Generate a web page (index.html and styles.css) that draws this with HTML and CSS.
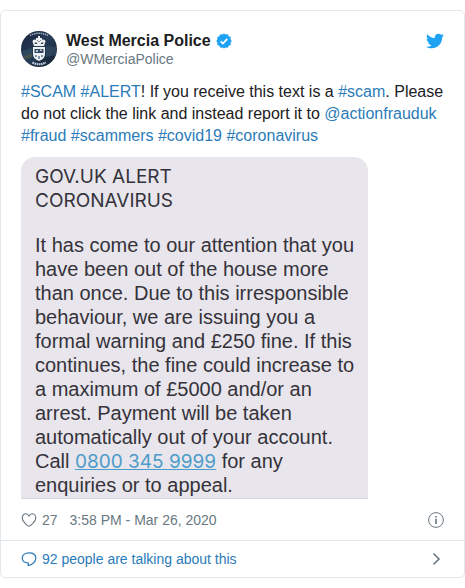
FILE: index.html
```html
<!DOCTYPE html>
<html lang="en">
<head>
<meta charset="utf-8">
<meta name="viewport" content="width=device-width, initial-scale=1">
<title>West Mercia Police on Twitter</title>
<link rel="stylesheet" href="styles.css">
</head>
<body>
<article class="tweet">
  <div class="content">
    <header class="header">
      <a class="author" href="#">
        <svg class="avatar" viewBox="0 0 36 36" aria-hidden="true">
          <defs>
            <linearGradient id="night" x1="0" y1="0" x2="1" y2="1">
              <stop offset="0" stop-color="#17233f"/>
              <stop offset=".5" stop-color="#263c56"/>
              <stop offset="1" stop-color="#111c2d"/>
            </linearGradient>
          </defs>
          <circle cx="18" cy="18" r="18" fill="url(#night)"/>
          <path d="M1 20l10-3v9l-8 2zM25 15l10 1v8l-10 2z" fill="#36546a" opacity=".6"/>
          <path d="M3 25l8-2v3l-7 2z" fill="#575b38" opacity=".6"/>
          <path d="M9 4.500Q18 0 27 4.500" fill="none" stroke="#a7b0c2" stroke-width="1.500" stroke-dasharray="1.500 .7"/>
          <path d="M11.500 31.500Q18 35 25 31.500" fill="none" stroke="#c5d0df" stroke-width="2.200" stroke-dasharray="1.600 .6"/>
          <path d="M17 5h2v2h2v2h-2v1h-2V9h-2V7h2z" fill="#eef2f5"/>
          <path d="M13 15l-1.500-4.500q0-2 2.500-2 2.500 0 4 2.500 1.500-2.500 4-2.500 2.500 0 2.500 2L23 15z" fill="#eef2f5"/>
          <path d="M13.500 11.500h2l1 1.500h-2.500zM19.500 13l1-1.500h2l-.5 1.500z" fill="#34435b"/>
          <path d="M12 16h12v7q0 5-6 7-6-2-6-7z" fill="#eef2f5"/>
          <path d="M13.500 18h9v4h-9z" fill="#344862"/>
          <path d="M15 19h2v2h-2zM19 18.500h2v1.500h-2z" fill="#b8c7d3"/>
          <path d="M14 24h2v2h-2zM17 25h2v3h-2zM20 24h2v2h-2z" fill="#8195aa"/>
        </svg>
        <span class="identity">
          <span class="name">West Mercia Police
            <svg class="verified" viewBox="0 0 16 16" role="img" aria-label="Verified">
              <path d="M8 .4l1.700 1.200 2.100-.3.900 1.900 2 .8-.1 2.200L15.700 8l-1.100 1.800.1 2.200-2 .8-.9 1.900-2.100-.3L8 15.600l-1.700-1.200-2.100.3-.9-1.900-2-.8.1-2.200L.3 8l1.100-1.800L1.300 4l2-.8.9-1.900 2.100.3z" fill="#1da1f2"/>
              <path d="M4.700 8.300l2.200 2.200 4.300-4.600" fill="none" stroke="#fff" stroke-width="1.800"/>
            </svg>
          </span>
          <span class="handle">@WMerciaPolice</span>
        </span>
      </a>
      <a class="brand" href="#" aria-label="Twitter">
        <svg class="bird" viewBox="0 0 24 24" aria-hidden="true">
          <path fill="#1da1f2" d="M23.954 4.569c-.885.389-1.830.654-2.825.775 1.014-.611 1.794-1.574 2.163-2.723-.951.555-2.005.959-3.127 1.184-.896-.959-2.173-1.559-3.591-1.559-2.717 0-4.920 2.203-4.920 4.917 0 .390.045.765.127 1.124C7.691 8.094 4.066 6.130 1.640 3.161c-.427.722-.666 1.561-.666 2.475 0 1.710.870 3.213 2.188 4.096-.807-.026-1.566-.248-2.228-.616v.061c0 2.385 1.693 4.374 3.946 4.827-.413.111-.849.171-1.296.171-.314 0-.615-.030-.916-.086.631 1.953 2.445 3.377 4.604 3.417-1.680 1.319-3.809 2.105-6.102 2.105-.390 0-.779-.023-1.170-.067 2.189 1.394 4.768 2.209 7.557 2.209 9.054 0 13.999-7.496 13.999-13.986 0-.209 0-.420-.015-.630.961-.689 1.800-1.560 2.460-2.548z"/>
        </svg>
      </a>
    </header>

    <p class="text"><a href="#">#SCAM</a> <a href="#">#ALERT</a>! If you receive this text is a <a href="#">#scam</a>. Please do not click the link and instead report it to <a href="#">@actionfrauduk</a> <a href="#">#fraud</a> <a href="#">#scammers</a> <a href="#">#covid19</a> <a href="#">#coronavirus</a></p>

    <div class="message">
      <p class="message-title">GOV.UK ALERT<br>CORONAVIRUS</p>
      <p>It has come to our attention that you<br>have been out of the house more<br>than once. Due to this irresponsible<br>behaviour, we are issuing you a<br>formal warning and £250 fine. If this<br>continues, the fine could increase to<br>a maximum of £5000 and/or an<br>arrest. Payment will be taken<br>automatically out of your account.<br>Call <a class="phone" href="#">0800 345 9999</a> for any<br>enquiries or to appeal.</p>
    </div>

    <div class="meta">
      <button class="like" type="button" aria-label="Like, 27 likes">
        <svg class="icon" viewBox="0 0 16 16" aria-hidden="true">
          <path d="M8 14.200C6.800 14.200 1.200 9.600 1.200 5.700c0-2.300 1.700-4 3.600-4C6.300 1.700 7.400 2.700 8 4c.6-1.300 1.700-2.300 3.200-2.300 1.900 0 3.600 1.700 3.600 4 0 3.900-5.600 8.500-6.800 8.500z" fill="none" stroke="currentColor" stroke-width="1.100"/>
        </svg>
        <span>27</span>
      </button>
      <a class="time" href="#">3:58 PM - Mar 26, 2020</a>
      <a class="info" href="#" aria-label="Twitter Ads info and privacy">
        <svg class="icon" viewBox="0 0 16 16" aria-hidden="true">
          <circle cx="8" cy="8" r="7.400" fill="none" stroke="currentColor" stroke-width="1"/>
          <path d="M7.200 4h1.600v1.500H7.200zM7.200 6.800h1.600V12H7.200z" fill="currentColor"/>
        </svg>
      </a>
    </div>
  </div>

  <a class="replies" href="#">
    <svg class="icon" viewBox="0 0 16 16" aria-hidden="true">
      <path d="M7 11.800C3.500 11.800 1.200 9.800 1.200 7S3.800 1.800 8 1.800 14.800 4 14.800 7c0 3.800-3.500 6.500-7.800 7.700.5-.8.500-1.900 0-2.900z" fill="none" stroke="currentColor" stroke-width="1.200" stroke-linejoin="round"/>
    </svg>
    <span>92 people are talking about this</span>
    <svg class="icon chevron" viewBox="0 0 16 16" aria-hidden="true">
      <path d="M5.500 2.500L11 8l-5.500 5.500" fill="none" stroke="currentColor" stroke-width="1.600"/>
    </svg>
  </a>
</article>
</body>
</html>
```

FILE: styles.css
```css
* {
  box-sizing: border-box;
}

body {
  margin: 0;
  padding: 10px 0;
  background: #fff;
  color: #1c2022;
  font: 16px/22px "Liberation Sans", Arial, sans-serif;
}

a {
  color: #2b7bb9;
  text-decoration: none;
}

p {
  margin: 0;
}

svg {
  display: block;
  flex: none;
}

.tweet {
  border: 1px solid #e1e8ed;
  border-radius: 5px;
}

.content {
  padding: 20px 20px 9px;
}

.header {
  display: flex;
  justify-content: space-between;
  align-items: flex-start;
}

.author {
  display: flex;
  gap: 9px;
}

.avatar {
  width: 36px;
  height: 36px;
}

.identity {
  display: flex;
  flex-direction: column;
}

.name {
  display: flex;
  align-items: center;
  gap: 5px;
  color: #1c2022;
  font-weight: 700;
  line-height: 20px;
}

.verified {
  width: 16px;
  height: 16px;
}

.handle {
  color: #697882;
  font-size: 14px;
  line-height: 16px;
}

.bird {
  width: 18px;
  height: 20px;
}

.text {
  margin-top: 14px;
}

.message {
  display: flex;
  flex-direction: column;
  gap: 20px;
  width: fit-content;
  margin-top: 10px;
  padding: 8px 14px 1px;
  border-bottom: 1px solid #d8d6dc;
  border-radius: 14px 14px 0 0;
  background: #e8e6ec;
  color: #35323a;
  font-size: 20px;
  line-height: 24px;
  white-space: nowrap;
}

.message-title,
.phone {
  font-family: Inter, "Liberation Sans", sans-serif;
  font-size: 19px;
}

.phone {
  color: #4c9bc8;
  line-height: 20px;
  text-decoration: underline;
}

.meta {
  display: flex;
  align-items: center;
  margin-top: 10px;
  color: #697882;
  font-size: 14px;
}

.like {
  display: flex;
  align-items: center;
  gap: 5px;
  padding: 0;
  border: 0;
  background: none;
  color: inherit;
  font: inherit;
}

.icon {
  width: 16px;
  height: 16px;
}

.time {
  margin-left: 12px;
  color: inherit;
}

.info {
  margin-left: auto;
  color: inherit;
}

.replies {
  display: flex;
  align-items: center;
  gap: 5px;
  padding: 7px 20px;
  border-top: 1px solid #e1e8ed;
  font-size: 14px;
}

.chevron {
  margin-left: auto;
  color: #697882;
}
```
